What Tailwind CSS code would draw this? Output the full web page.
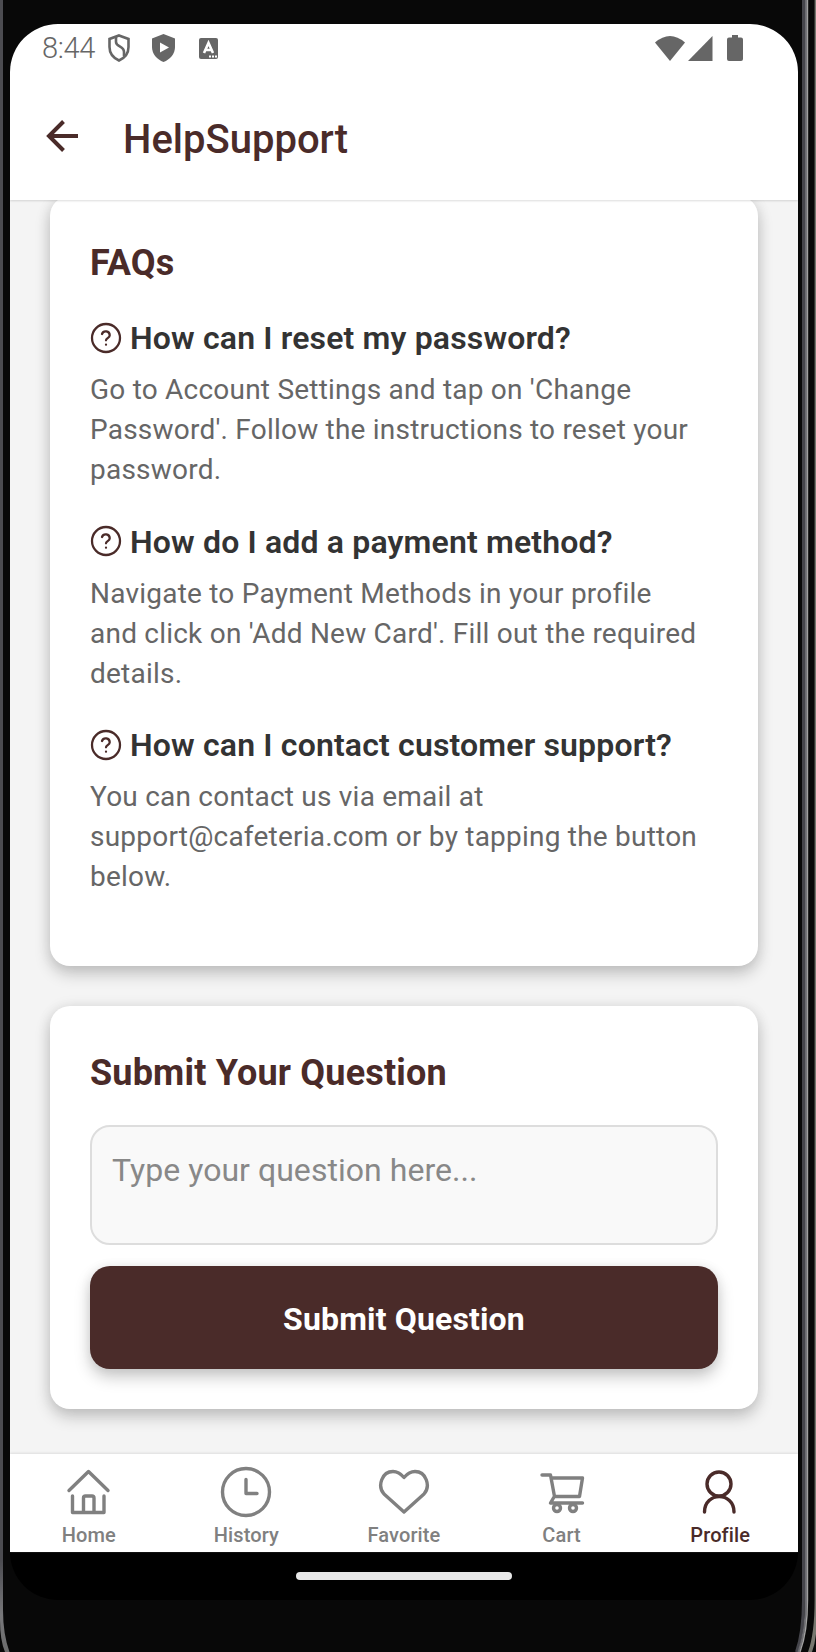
<!DOCTYPE html>
<html lang="en">
<head>
<meta charset="utf-8">
<title>HelpSupport</title>
<script src="https://cdn.jsdelivr.net/npm/@tailwindcss/browser@4"></script>
</head>
<body class="bg-[#080808]">
<div class="relative h-[1652px] w-[816px] overflow-hidden bg-[#080808] px-[10px] pt-6 font-['Roboto',sans-serif]">
  <!-- device bezel -->
  <svg class="absolute inset-0" width="816" height="1652" fill="none">
    <defs>
      <linearGradient id="rim" gradientUnits="userSpaceOnUse" x1="0" y1="1560" x2="0" y2="1652">
        <stop offset="0" stop-color="#4c4c51"/><stop offset=".6" stop-color="#77777a"/><stop offset="1" stop-color="#6c6c6c"/>
      </linearGradient>
    </defs>
    <path d="M0 0H3V1610Q3 1634 9.500 1652H5Q0 1640 0 1620Z" fill="url(#rim)"/>
    <path d="M803.5 0V1600Q803.500 1632 796.500 1652" stroke="#45454b" stroke-width="3"/>
    <path d="M806 0V1600Q806 1632 798.500 1652" stroke="#6b6b70" stroke-width="2"/>
    <path d="M807.500 0V1600Q807.500 1632 800 1652" stroke="#a0a0a0" stroke-width="1.400"/>
    <path d="M814.600 0V1600Q814.600 1634 808 1652H812Q815 1644 816 1634V0Z" fill="#77776f"/>
  </svg>

  <div class="relative flex h-[1576px] w-[788px] flex-col overflow-hidden rounded-[48px] bg-black">
    <header class="relative z-10 h-[176px] shrink-0 bg-white shadow-[0_1px_2px_rgba(0,0,0,0.14)]">
      <div class="flex h-12 items-center pl-8 pr-[55px] text-[#666]">
        <span class="w-[59px] text-[29px] leading-none font-[350] tracking-[-0.3px]">8:44</span>
        <svg class="ml-[7px]" width="22" height="28" viewBox="0 0 22 28" fill="none" stroke="currentColor" stroke-width="2.6"><path d="M11 1.500L20.500 5V13C20.500 19 16.500 24 11 26.500C5.500 24 1.500 19 1.500 13V5Z"/><path d="M8 3V8C8 13 16 12 16 18V22"/></svg>
        <svg class="ml-[22px]" width="23" height="28" viewBox="0 0 23 28"><path d="M11.500 0L23 4.500V13C23 20 18 25.500 11.500 28C5 25.500 0 20 0 13V4.500Z" fill="currentColor"/><path d="M8 8.500V18.500L17 13.500Z" fill="#fff"/></svg>
        <svg class="ml-6" width="19" height="21" viewBox="0 0 19 21"><rect width="19" height="21" rx="2" fill="currentColor"/><path d="M5 15L9.500 5L14 15M6.500 12H12.500" fill="none" stroke="#fff" stroke-width="2.600"/><path d="M10 18.500H18" stroke="#fff" stroke-width="1.800" stroke-dasharray="2 1"/></svg>
        <svg class="ml-auto" width="88" height="27" viewBox="0 0 88 27" fill="currentColor"><path d="M0 7.500Q15 -5.500 30 7.500L15 26Z"/><path d="M33 26L57.500 1V26Z"/><path d="M77 0H83V2.500H86Q88 2.500 88 4.500V24Q88 26 86 26H74Q72 26 72 24V4.500Q72 2.500 74 2.500H77Z"/></svg>
      </div>
      <div class="flex h-[128px] items-center pl-9 text-[#4a2b29]">
        <svg width="32" height="32" viewBox="0 0 32 32" fill="none" stroke="currentColor" stroke-width="4"><path d="M32 16H3M17.500 1.500L3 16L17.500 30.500"/></svg>
        <h1 class="ml-[45px] pt-2 text-[40px] leading-[48px] font-medium">HelpSupport</h1>
      </div>
    </header>

    <main class="flex h-[1254px] shrink-0 flex-col gap-10 overflow-hidden bg-[#f4f4f4] px-10">
      <section class="-mt-1 h-[770px] shrink-0 rounded-[20px] bg-white px-10 pt-[45px] shadow-[0_8px_16px_rgba(0,0,0,0.2),0_0_14px_rgba(0,0,0,0.08)]">
        <h2 class="text-[36px] leading-[44px] font-bold tracking-[0.18px] text-[#4a2b29]">FAQs</h2>
        <div class="mt-[31px] flex flex-col gap-[29.500px]">
          <article class="h-[174px]">
            <div class="flex h-11 items-center gap-2">
              <svg class="-mt-[1px]" width="32" height="32" viewBox="0 0 24 24" fill="none" stroke="#4a2b29" stroke-width="1.700" stroke-linecap="round" stroke-linejoin="round"><circle cx="12" cy="12" r="10.500"/><path d="M9 9a3 3 0 0 1 5.800 1c0 2-2.800 2.200-2.800 3.700"/><path d="M12 17h.01"/></svg>
              <h3 class="text-[32px] leading-[44px] font-semibold tracking-[0.16px] text-[#333]">How can I reset my password?</h3>
            </div>
            <p class="mt-[10px] text-[28px] leading-[40px] tracking-[0.22px] whitespace-nowrap text-[#666]">Go to Account Settings and tap on 'Change<br>Password'. Follow the instructions to reset your<br>password.</p>
          </article>
          <article class="h-[174px]">
            <div class="flex h-11 items-center gap-2">
              <svg class="-mt-[1px]" width="32" height="32" viewBox="0 0 24 24" fill="none" stroke="#4a2b29" stroke-width="1.700" stroke-linecap="round" stroke-linejoin="round"><circle cx="12" cy="12" r="10.500"/><path d="M9 9a3 3 0 0 1 5.800 1c0 2-2.800 2.200-2.800 3.700"/><path d="M12 17h.01"/></svg>
              <h3 class="text-[32px] leading-[44px] font-semibold tracking-[0.16px] text-[#333]">How do I add a payment method?</h3>
            </div>
            <p class="mt-[10px] text-[28px] leading-[40px] tracking-[0.22px] whitespace-nowrap text-[#666]">Navigate to Payment Methods in your profile<br>and click on 'Add New Card'. Fill out the required<br>details.</p>
          </article>
          <article class="h-[174px]">
            <div class="flex h-11 items-center gap-2">
              <svg class="-mt-[1px]" width="32" height="32" viewBox="0 0 24 24" fill="none" stroke="#4a2b29" stroke-width="1.700" stroke-linecap="round" stroke-linejoin="round"><circle cx="12" cy="12" r="10.500"/><path d="M9 9a3 3 0 0 1 5.800 1c0 2-2.800 2.200-2.800 3.700"/><path d="M12 17h.01"/></svg>
              <h3 class="text-[32px] leading-[44px] font-semibold tracking-[0.16px] text-[#333]">How can I contact customer support?</h3>
            </div>
            <p class="mt-[10px] text-[28px] leading-[40px] tracking-[0.22px] whitespace-nowrap text-[#666]">You can contact us via email at<br>support@cafeteria.com or by tapping the button<br>below.</p>
          </article>
        </div>
      </section>

      <section class="h-[403px] shrink-0 rounded-[20px] bg-white px-10 pt-[45px] shadow-[0_8px_16px_rgba(0,0,0,0.2),0_0_14px_rgba(0,0,0,0.08)]">
        <h2 class="text-[36px] leading-[44px] font-bold tracking-[0.18px] text-[#4a2b29]">Submit Your Question</h2>
        <div class="mt-[30px] h-[120px] rounded-[20px] border-2 border-[#ddd] bg-[#f9f9f9] px-5 pt-[21px] text-[32px] leading-[44px] tracking-[0.04px] text-[#888]">Type your question here...</div>
        <button class="mt-[21px] block h-[103px] w-full rounded-[20px] bg-[#4a2b29] pt-0.5 text-[32px] font-bold tracking-[0.15px] text-white shadow-[0_8px_16px_rgba(0,0,0,0.22),0_0_12px_rgba(0,0,0,0.06)]">Submit Question</button>
      </section>
    </main>

    <nav class="relative flex h-[98px] shrink-0 bg-white text-[20px] leading-6 font-medium text-[#808080] shadow-[0_-1px_2px_#dedede]">
      <a class="flex flex-1 flex-col items-center pt-3">
        <svg width="52" height="52" viewBox="0 0 52 52" fill="none" stroke="currentColor" stroke-width="3.400" stroke-linecap="round" stroke-linejoin="round"><path d="M6 24.500L25.500 5.500L45 24.500M9.500 30V46.500H41V30M20.500 46V32Q20.500 30 22.500 30H29Q31 30 31 32V46"/></svg>
        <span class="mt-[5px] tracking-[0.1px]">Home</span>
      </a>
      <a class="flex flex-1 flex-col items-center pt-3">
        <svg width="52" height="52" viewBox="0 0 52 52" fill="none" stroke="currentColor" stroke-width="3.400" stroke-linecap="round" stroke-linejoin="round"><circle cx="26" cy="26" r="23.500"/><path d="M26 13.500V27.500H37"/></svg>
        <span class="mt-[5px] tracking-[0.1px]">History</span>
      </a>
      <a class="flex flex-1 flex-col items-center pt-3">
        <svg width="52" height="52" viewBox="0 0 52 52" fill="none" stroke="currentColor" stroke-width="3.400" stroke-linecap="round" stroke-linejoin="round"><path d="M26 46L6 28C-1 20 4 5.500 15 5.500C20 5.500 23 8 26 11.500C29 8 32 5.500 37 5.500C48 5.500 53 20 46 28Z"/></svg>
        <span class="mt-[5px] tracking-[0.1px]">Favorite</span>
      </a>
      <a class="flex flex-1 flex-col items-center pt-3">
        <svg width="52" height="52" viewBox="0 0 52 52" fill="none" stroke="currentColor" stroke-width="3.400" stroke-linecap="round" stroke-linejoin="round"><path d="M6 9H14.500L18.500 30.500H43.500L46.500 12H15M18 31L14.500 37H46.500"/><circle cx="21" cy="42" r="3.500"/><circle cx="37" cy="42" r="3.500"/></svg>
        <span class="mt-[5px] tracking-[0.1px]">Cart</span>
      </a>
      <a class="flex flex-1 flex-col items-center pt-3 text-[#4a2b29]">
        <svg width="52" height="52" viewBox="0 0 52 52" fill="none" stroke="currentColor" stroke-width="3.400" stroke-linecap="round" stroke-linejoin="round"><circle cx="26" cy="18" r="12"/><path d="M11.500 46C11.500 25.500 41 25.500 41 46"/></svg>
        <span class="mt-[5px] pl-0.5 tracking-[0.1px]">Profile</span>
      </a>
    </nav>

    <div class="flex h-12 shrink-0 items-center justify-center">
      <div class="h-2 w-[216px] rounded-full bg-[#e7e7e7]"></div>
    </div>
  </div>
</div>
</body>
</html>
